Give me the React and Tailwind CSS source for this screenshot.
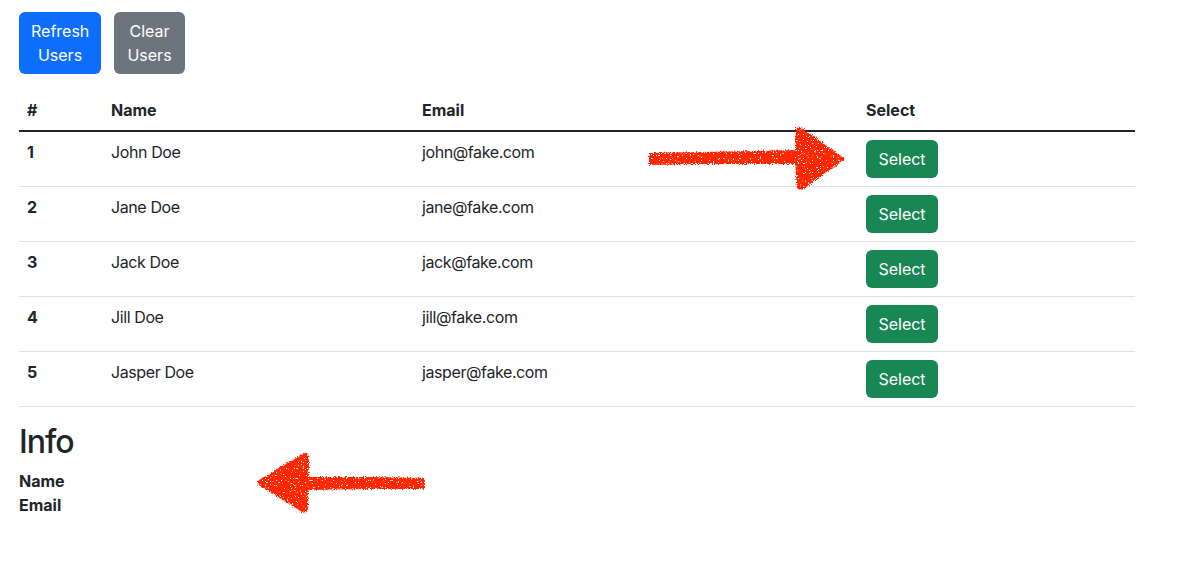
import React from "react";

const users = [
  { id: 1, name: "John Doe", email: "john@fake.com" },
  { id: 2, name: "Jane Doe", email: "jane@fake.com" },
  { id: 3, name: "Jack Doe", email: "jack@fake.com" },
  { id: 4, name: "Jill Doe", email: "jill@fake.com" },
  { id: 5, name: "Jasper Doe", email: "jasper@fake.com" },
];

function Arrows() {
  return (
    <svg
      className="absolute left-0 top-0 pointer-events-none"
      width="1187"
      height="565"
      viewBox="0 0 1187 565"
    >
      <defs>
        <filter id="rough" x="-10%" y="-10%" width="120%" height="120%">
          <feTurbulence type="fractalNoise" baseFrequency="0.9" numOctaves="2" seed="3" result="n" />
          <feDisplacementMap in="SourceGraphic" in2="n" scale="5" xChannelSelector="R" yChannelSelector="G" result="d" />
          <feTurbulence type="fractalNoise" baseFrequency="0.6" numOctaves="2" seed="11" result="n2" />
          <feColorMatrix
            in="n2"
            type="matrix"
            values="0 0 0 0 0  0 0 0 0 0  0 0 0 0 0  -16 0 0 0 11.6"
            result="mask"
          />
          <feComposite in="d" in2="mask" operator="in" />
        </filter>
      </defs>
      <g fill="#ff2600" filter="url(#rough)">
        <path d="M649 153 L700 152 L800 150 L800 164 L700 164 L649 165 Z" />
        <path d="M796 128 Q800 126 806 131 L845 159 L806 187 Q800 192 797 188 Q794 160 796 128 Z" />
        <path d="M305 477 L370 477 L425 478 L425 489 L370 489 L305 490 Z" />
        <path d="M304 453 Q309 451 309 460 L308 506 Q308 515 302 512 L259 485 Q256 483 259 480 Z" />
      </g>
    </svg>
  );
}

export default function App() {
  return (
    <div
      className="relative w-[1187px] h-[565px] bg-white text-[#212529] text-[16px] leading-[24px]"
      style={{ fontFamily: "Inter, 'Noto Sans', sans-serif" }}
    >
      <div className="px-[19px] pt-[12px]">
        <div className="flex gap-[13px]">
          <button className="w-[82px] h-[62px] rounded-[6px] bg-[#0d6efd] text-white px-[12px] py-[6px] leading-[24px]">
            Refresh Users
          </button>
          <button className="w-[71px] h-[62px] rounded-[6px] bg-[#6c757d] text-white px-[12px] py-[6px] leading-[24px]">
            Clear Users
          </button>
        </div>

        <table className="mt-[16px] w-[1116px] border-collapse text-left">
          <thead>
            <tr className="border-b-2 border-[#212529]">
              <th className="w-[84px] h-[40px] px-[8px] py-[8px] font-bold align-top">#</th>
              <th className="w-[311px] px-[8px] py-[8px] font-bold align-top">Name</th>
              <th className="w-[444px] px-[8px] py-[8px] font-bold align-top">Email</th>
              <th className="px-[8px] py-[8px] font-bold align-top">Select</th>
            </tr>
          </thead>
          <tbody>
            {users.map((u) => (
              <tr key={u.id} className="border-b border-[#dee2e6]">
                <td className="px-[8px] py-[8px] font-bold align-top">{u.id}</td>
                <td className="px-[8px] py-[8px] align-top tracking-[-0.4px]">{u.name}</td>
                <td className="px-[8px] py-[8px] align-top tracking-[-0.4px]">{u.email}</td>
                <td className="px-[8px] py-[8px] align-top">
                  <button className="w-[72px] h-[38px] rounded-[6px] bg-[#198754] text-white px-[12px] py-[6px] leading-[24px]">
                    Select
                  </button>
                </td>
              </tr>
            ))}
          </tbody>
        </table>

        <h2 className="mt-[16px] mb-[8px] text-[32px] leading-[38px] font-medium tracking-[-1px]">Info</h2>
        <div className="font-bold">Name</div>
        <div className="font-bold">Email</div>
      </div>
      <Arrows />
    </div>
  );
}
